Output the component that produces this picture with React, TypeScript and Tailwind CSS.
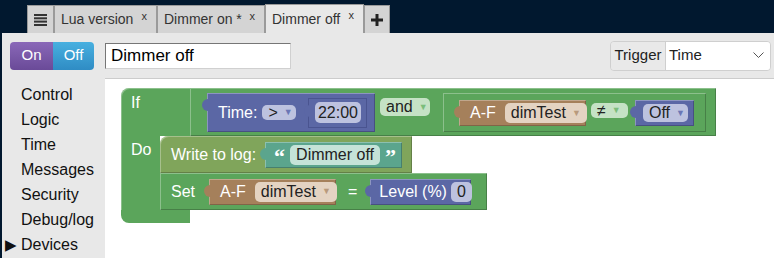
import React from 'react';

const FONT = "font-['Liberation_Sans',Arial,sans-serif]";
const EDGE = 'shadow-[inset_1px_1px_0_rgba(255,255,255,0.3),inset_-1px_-1px_0_rgba(0,0,0,0.22)]';

// little output tab sticking out of the left edge of a value block
function Tab({ color }: { color: string }) {
  return <div className={`absolute left-[-5px] top-[6px] w-[6px] h-[12px] rounded-l-full ${color}`} />;
}

function Pill({ text, arrow, bg, arrowColor, className = '' }: { text: string; arrow?: boolean; bg: string; arrowColor?: string; className?: string }) {
  return (
    <div className={`flex shrink-0 items-center gap-[6px] rounded-[5px] px-[6px] text-[16px] text-[#222] leading-none ${bg} ${className}`}>
      <span>{text}</span>
      {arrow && <span className={`text-[9px] ${arrowColor}`}>▼</span>}
    </div>
  );
}

function DeviceBlock({ className = '' }: { className?: string }) {
  return (
    <div className={`relative flex shrink-0 items-center h-[26px] w-[127px] bg-[#a5805b] pl-[11px] pr-[8px] gap-[9px] ${EDGE} ${className}`}>
      <Tab color="bg-[#a5805b]" />
      <span className="text-white text-[16px]">A-F</span>
      <Pill text="dimTest" arrow bg="bg-[#e4d3c2]" arrowColor="text-[#b99a7c]" className="h-[20px] flex-1 justify-between" />
    </div>
  );
}

function TabButton({ label, active, width }: { label: string; active?: boolean; width: string }) {
  return (
    <div className={`relative ${width} border border-b-0 border-[#9a9a9a] ${active ? 'bg-[#e8e8e8] h-[29px]' : 'bg-[#d4d4d4] h-[28px]'} flex items-center pl-[6px] text-[14px] text-[#333]`}>
      <span>{label}</span>
      <span className="absolute right-[9px] top-[2px] text-[11px] text-[#333]">x</span>
    </div>
  );
}

export default function App() {
  const menu = ['Control', 'Logic', 'Time', 'Messages', 'Security', 'Debug/log'];

  return (
    <div className={`w-[774px] h-[258px] overflow-hidden whitespace-nowrap bg-[#01182f] ${FONT}`}>
      {/* TAB STRIP */}
      <div className="h-[33px] flex items-end pl-[27px]">
        <div className="h-[28px] w-[27px] border border-b-0 border-[#9a9a9a] bg-[#d4d4d4] flex items-center justify-center">
          <svg width="13" height="12" viewBox="0 0 13 12">
            <rect x="0" y="0" width="13" height="2" fill="#333" />
            <rect x="0" y="3.3" width="13" height="2" fill="#333" />
            <rect x="0" y="6.6" width="13" height="2" fill="#333" />
            <rect x="0" y="10" width="13" height="2" fill="#333" />
          </svg>
        </div>
        <TabButton label="Lua version" width="w-[103px]" />
        <TabButton label="Dimmer on *" width="w-[108px]" />
        <TabButton label="Dimmer off" width="w-[99px]" active />
        <div className="h-[28px] w-[26px] border border-b-0 border-[#9a9a9a] bg-[#d4d4d4] flex items-center justify-center">
          <svg width="12" height="12" viewBox="0 0 12 12">
            <rect x="4.5" y="0" width="3" height="12" fill="#222" />
            <rect x="0" y="4.5" width="12" height="3" fill="#222" />
          </svg>
        </div>
      </div>

      <div className="ml-[2px] bg-[#e8e8e8] h-[225px] flex flex-col">
        {/* TOOLBAR */}
        <div className="h-[45px] flex items-center pl-[8px] pr-[3px] shrink-0">
          <div className="flex h-[28px] rounded-[4px] overflow-hidden text-[15px] text-white">
            <div className="w-[43px] flex items-center justify-center bg-gradient-to-b from-[#8a68b8] to-[#6a4a98]">On</div>
            <div className="w-[41px] flex items-center justify-center bg-gradient-to-b from-[#48b0e0] to-[#2f8cc4]">Off</div>
          </div>
          <div className="ml-[11px] w-[186px] h-[26px] bg-white border border-[#767676] border-r-[#d0d0d0] border-b-[#d0d0d0] flex items-center pl-[5px] text-[17px] text-black">
            Dimmer off
          </div>
          <div className="ml-auto flex h-[30px] w-[161px] rounded-[4px] border border-[#cfcfcf] overflow-hidden text-[15px] text-[#222]">
            <div className="w-[55px] bg-[#e9e9e9] border-r border-[#cfcfcf] flex items-center justify-center">Trigger</div>
            <div className="flex-1 bg-white flex items-center justify-between pl-[3px] pr-[6px]">
              <span>Time</span>
              <svg width="11" height="7" viewBox="0 0 11 7">
                <polyline points="0.5,0.5 5.5,5.5 10.5,0.5" fill="none" stroke="#555" strokeWidth="1" />
              </svg>
            </div>
          </div>
        </div>

        <div className="flex flex-1 min-h-0">
          {/* SIDEBAR */}
          <div className="w-[103px] pt-[4px] text-[16px] text-[#111] leading-[25px]">
            {menu.map((m) => (
              <div key={m} className="pl-[19px]">{m}</div>
            ))}
            <div className="flex items-center pl-[3px]">
              <span className="text-[15px] w-[16px]">▶</span>
              <span>Devices</span>
            </div>
          </div>

          {/* WORKSPACE */}
          <div className="flex-1 bg-white border-t border-[#cccccc] pt-[9px] pl-[16px]">
            <div className="inline-flex flex-col items-start text-white text-[16px]">
              {/* IF ROW */}
              <div className="flex">
                <div className="w-[69px] h-[48px] bg-[#5ba55b] rounded-tl-[8px] pl-[10px] pt-[3px] shadow-[inset_1px_1px_0_rgba(255,255,255,0.3)]">If</div>
                <div className={`relative w-[526px] h-[48px] bg-[#5ba55b] flex items-start pt-[5px] pl-[17px] ${EDGE}`}>
                  {/* Time block */}
                  <div className={`relative w-[168px] h-[39px] bg-[#5b67a5] flex items-center pl-[11px] ${EDGE}`}>
                    <Tab color="bg-[#5b67a5]" />
                    <span>Time:</span>
                    <Pill text=">" arrow bg="bg-[#bdc2df]" arrowColor="text-[#6b77b5]" className="ml-[5px] h-[15px] w-[34px]" />
                    <div className="relative ml-[12px] w-[59px] h-[30px] bg-[#5b67a5] border border-[#4a5490] flex items-center justify-center">
                      <Tab color="bg-[#5b67a5]" />
                      <Pill text="22:00" bg="bg-[#bdc2df]" className="h-[21px] w-[46px] justify-center" />
                    </div>
                  </div>
                  <Pill text="and" arrow bg="bg-[#c5e2c5]" arrowColor="text-[#7bbd7b]" className="ml-[5px] mt-[5px] h-[18px] w-[50px]" />
                  {/* compare block */}
                  <div className={`relative ml-[13px] w-[263px] h-[39px] bg-[#5ba55b] flex items-start pl-[16px] pt-[7px] ${EDGE}`}>
                    <DeviceBlock />
                    <Pill text="≠" arrow bg="bg-[#c5e2c5]" arrowColor="text-[#7bbd7b]" className="ml-[5px] mt-[3px] h-[15px] w-[37px]" />
                    <div className={`relative ml-[7px] w-[59px] h-[26px] bg-[#5b67a5] flex items-center pl-[8px] ${EDGE}`}>
                      <Tab color="bg-[#5b67a5]" />
                      <Pill text="Off" arrow bg="bg-[#bdc2df]" arrowColor="text-[#6b77b5]" className="h-[18px] w-[45px]" />
                    </div>
                  </div>
                </div>
              </div>

              {/* DO ROW */}
              <div className="flex">
                <div className="w-[39px] bg-[#5ba55b] pl-[10px] pt-[2px] shadow-[inset_1px_0_0_rgba(255,255,255,0.3)]">Do</div>
                <div className="flex flex-col items-start">
                  <div className={`relative w-[252px] h-[37px] bg-[#80a55b] rounded-tl-[8px] flex items-center pl-[11px] ${EDGE}`}>
                    <span>Write to log:</span>
                    <div className={`relative ml-[9px] w-[137px] h-[26px] bg-[#5ba58d] flex items-center pl-[9px] ${EDGE}`}>
                      <Tab color="bg-[#5ba58d]" />
                      <span className="text-[22px] font-bold font-['Liberation_Serif',serif] leading-none mt-[5px]">“</span>
                      <Pill text="Dimmer off" bg="bg-[#c5e3d8]" className="ml-[5px] h-[20px]" />
                      <span className="ml-[5px] text-[22px] font-bold font-['Liberation_Serif',serif] leading-none mt-[5px]">”</span>
                    </div>
                  </div>
                  <div className={`relative w-[327px] h-[37px] bg-[#5ba55b] flex items-center pl-[11px] ${EDGE}`}>
                    <span>Set</span>
                    <DeviceBlock className="ml-[14px]" />
                    <span className="ml-[12px]">=</span>
                    <div className={`relative ml-[13px] w-[101px] h-[26px] bg-[#5b67a5] flex items-center pl-[9px] ${EDGE}`}>
                      <Tab color="bg-[#5b67a5]" />
                      <span>Level (%)</span>
                      <Pill text="0" bg="bg-[#bdc2df]" className="ml-[4px] h-[20px] w-[21px] justify-center" />
                    </div>
                  </div>
                </div>
              </div>

              {/* BOTTOM OF C */}
              <div className="w-[69px] h-[13px] bg-[#5ba55b] rounded-bl-[8px]" />
            </div>
          </div>
        </div>
      </div>
    </div>
  );
}
